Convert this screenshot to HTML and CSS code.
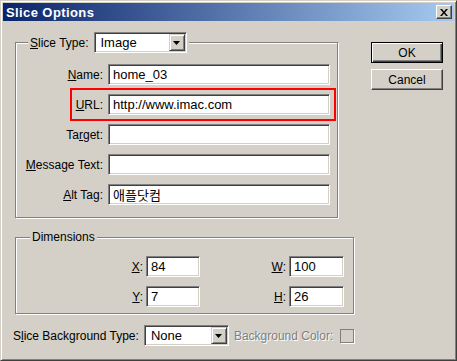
FILE: index.html
```html
<!DOCTYPE html>
<html>
<head>
    <title>Slice Options</title>
    <meta charset="utf-8">
    <link rel="stylesheet" href="styles.css">
</head>
<body>
    <div class="window">
        <div class="titlebar">
            <span class="title">Slice Options</span>
            <span class="close">
                <svg width="8" height="7" viewBox="0 0 8 7"><path d="M0 0h2l2 2.5 2-2.5h2l-3 3.5 3 3.5h-2l-2-2.5-2 2.5h-2l3-3.5z" fill="#000"/></svg>
            </span>
        </div>

        <div class="content">
            <div class="main">
                <fieldset class="group slice">
                    <legend>
                        <span class="legend-label"><u>S</u>lice Type:</span>
                        <div class="select type-select">
                            <span>Image</span>
                            <span class="drop"><svg width="7" height="4" viewBox="0 0 7 4"><path d="M0 0h7l-3.5 4z" fill="#000"/></svg></span>
                        </div>
                    </legend>
                    <div class="rows">
                        <div class="row">
                            <label><u>N</u>ame:</label>
                            <div class="field wide">home_03</div>
                        </div>
                        <div class="row highlight">
                            <label><u>U</u>RL:</label>
                            <div class="field wide">http://www.imac.com</div>
                        </div>
                        <div class="row">
                            <label>Ta<u>r</u>get:</label>
                            <div class="field wide"></div>
                        </div>
                        <div class="row">
                            <label><u>M</u>essage Text:</label>
                            <div class="field wide"></div>
                        </div>
                        <div class="row">
                            <label><u>A</u>lt Tag:</label>
                            <div class="field wide">애플닷컴</div>
                        </div>
                    </div>
                </fieldset>

                <fieldset class="group dims">
                    <legend>Dimensions</legend>
                    <div class="dims-grid">
                        <div class="rows tight">
                            <div class="row">
                                <label><u>X</u>:</label>
                                <div class="field small">84</div>
                            </div>
                            <div class="row">
                                <label><u>Y</u>:</label>
                                <div class="field small">7</div>
                            </div>
                        </div>
                        <div class="rows tight">
                            <div class="row">
                                <label><u>W</u>:</label>
                                <div class="field small w">100</div>
                            </div>
                            <div class="row">
                                <label><u>H</u>:</label>
                                <div class="field small w">26</div>
                            </div>
                        </div>
                    </div>
                </fieldset>

                <div class="bg-row">
                    <label>S<u>l</u>ice Background Type:</label>
                    <div class="select bg-select">
                        <span>None</span>
                        <span class="drop"><svg width="7" height="4" viewBox="0 0 7 4"><path d="M0 0h7l-3.5 4z" fill="#000"/></svg></span>
                    </div>
                    <span class="disabled">Background Color:</span>
                    <span class="swatch"></span>
                </div>
            </div>

            <div class="buttons">
                <button class="btn default">OK</button>
                <button class="btn">Cancel</button>
            </div>
        </div>
    </div>
</body>
</html>
```

FILE: styles.css
```css
* {
    box-sizing: border-box;
}
html, body {
    margin: 0;
    padding: 0;
}
body {
    background: #d4d0c8;
    font-family: "Liberation Sans", Arial, "Noto Sans CJK KR", sans-serif;
    font-size: 12px;
    color: #000;
}
label, legend, .disabled {
    white-space: nowrap;
}
.window {
    width: 457px;
    height: 361px;
    padding: 2px;
    background: #d4d0c8;
    border: 1px solid;
    border-color: #d4d0c8 #404040 #404040 #d4d0c8;
    box-shadow: inset 1px 1px 0 #fff, inset -1px -1px 0 #808080;
}
.titlebar {
    height: 18px;
    display: flex;
    align-items: center;
    justify-content: space-between;
    padding: 0 2px 0 3px;
    background: linear-gradient(to right, #0a246a, #a6caf0);
}
.title {
    color: #fff;
    font-weight: bold;
    font-size: 13px;
    letter-spacing: 0.4px;
}
.close {
    width: 16px;
    height: 14px;
    display: flex;
    align-items: center;
    justify-content: center;
    background: #d4d0c8;
    border: 1px solid;
    border-color: #fff #404040 #404040 #fff;
    box-shadow: inset -1px -1px 0 #808080;
}
.content {
    display: flex;
    gap: 15px;
    padding: 11px 10px 0 12px;
}
.main {
    width: 341px;
}
.group {
    margin: 0;
    min-inline-size: 0;
    border: 1px solid #808080;
    box-shadow: inset 1px 1px 0 #fff, 1px 1px 0 #fff;
}
.group legend {
    padding: 0 2px;
    background: #d4d0c8;
}
.slice {
    width: 323px;
    padding: 11px 7px 12px 12px;
}
.slice legend {
    display: flex;
    align-items: center;
    gap: 5px;
}
.dims {
    width: 339px;
    margin-top: 12px;
    padding: 12px 9px 6px 14px;
}
.rows {
    display: flex;
    flex-direction: column;
    align-items: flex-end;
    gap: 9px;
}
.row {
    display: flex;
    align-items: center;
    gap: 5px;
}
.rows.tight .row {
    gap: 3px;
}
.highlight {
    margin: -6px -6px;
    padding: 4px;
    border: 2px solid #ff0000;
}
.field {
    height: 21px;
    display: flex;
    align-items: center;
    padding: 0 4px;
    background: #fff;
    font-size: 13px;
    white-space: nowrap;
    border: 1px solid;
    border-color: #808080 #fff #fff #808080;
    box-shadow: inset 1px 1px 0 #404040, inset -1px -1px 0 #d4d0c8;
}
.field.wide {
    width: 222px;
}
.field.small {
    width: 54px;
}
.field.small.w {
    width: 55px;
}
.dims-grid {
    display: grid;
    grid-template-columns: 1fr 144px;
}
.select {
    height: 21px;
    display: flex;
    align-items: center;
    padding: 0 0 0 6px;
    background: #fff;
    font-size: 13px;
    border: 1px solid;
    border-color: #808080 #fff #fff #808080;
    box-shadow: inset 1px 1px 0 #404040, inset -1px -1px 0 #d4d0c8;
}
.type-select {
    width: 93px;
}
.bg-select {
    width: 85px;
}
.drop {
    margin-left: auto;
    margin-right: 1px;
    width: 16px;
    height: 17px;
    display: flex;
    align-items: center;
    justify-content: center;
    background: #d4d0c8;
    border: 1px solid;
    border-color: #d4d0c8 #404040 #404040 #d4d0c8;
    box-shadow: inset 1px 1px 0 #fff, inset -1px -1px 0 #808080;
}
.bg-row {
    display: flex;
    align-items: center;
    gap: 5px;
    margin: 11px 0 0 -2px;
}
.disabled {
    color: #808080;
    text-shadow: 1px 1px 0 #fff;
}
.swatch {
    width: 14px;
    height: 14px;
    margin-left: 2px;
    border: 1px solid #808080;
    box-shadow: 1px 1px 0 #fff;
}
.buttons {
    width: 72px;
    display: flex;
    flex-direction: column;
    gap: 6px;
    margin-top: 10px;
}
.btn {
    width: 72px;
    height: 21px;
    padding: 0;
    font-family: inherit;
    font-size: 12px;
    color: #000;
    background: #d4d0c8;
    border: 1px solid;
    border-color: #fff #404040 #404040 #fff;
    box-shadow: inset -1px -1px 0 #808080;
}
.btn.default {
    border-color: #000;
    box-shadow: inset 1px 1px 0 #fff, inset -1px -1px 0 #404040, inset -2px -2px 0 #808080;
}
```
